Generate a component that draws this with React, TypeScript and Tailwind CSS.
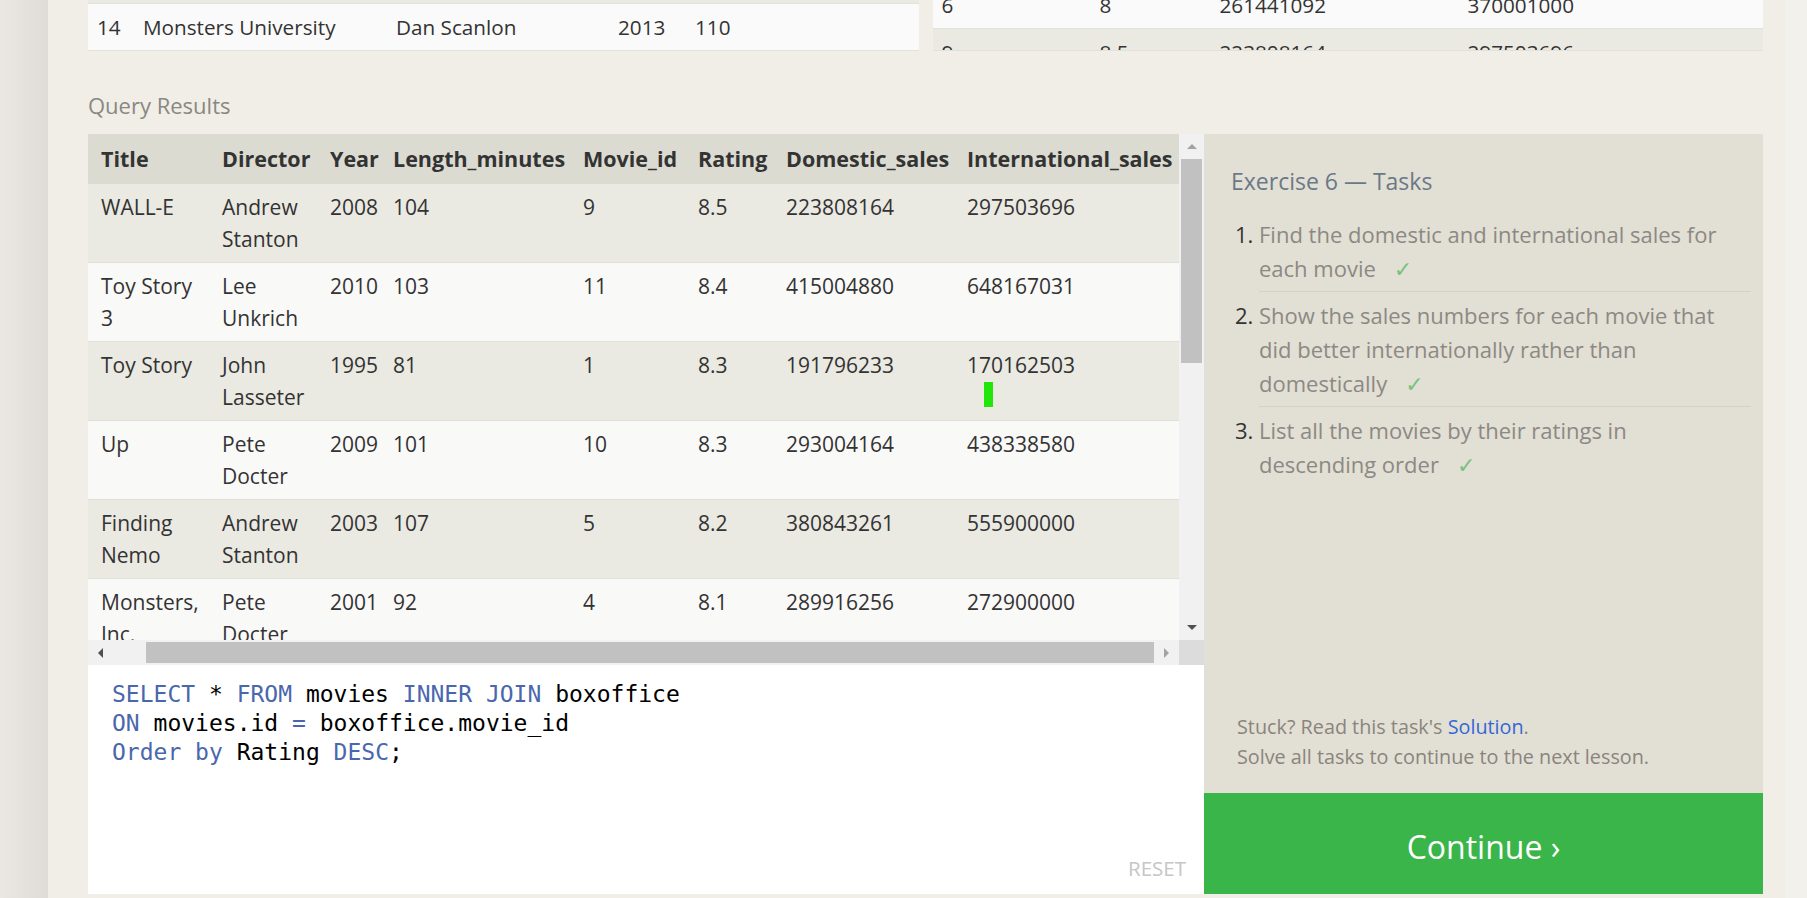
import React from 'react'

const resultCols = 'grid grid-cols-[121px_108px_63px_190px_115px_88px_181px_1fr]'

const headers = ['Title', 'Director', 'Year', 'Length_minutes', 'Movie_id', 'Rating', 'Domestic_sales', 'International_sales']

const rows = [
  ['WALL-E', 'Andrew Stanton', '2008', '104', '9', '8.5', '223808164', '297503696'],
  ['Toy Story 3', 'Lee Unkrich', '2010', '103', '11', '8.4', '415004880', '648167031'],
  ['Toy Story', 'John Lasseter', '1995', '81', '1', '8.3', '191796233', '170162503'],
  ['Up', 'Pete Docter', '2009', '101', '10', '8.3', '293004164', '438338580'],
  ['Finding Nemo', 'Andrew Stanton', '2003', '107', '5', '8.2', '380843261', '555900000'],
  ['Monsters, Inc.', 'Pete Docter', '2001', '92', '4', '8.1', '289916256', '272900000'],
  ['Ratatouille', 'Brad Bird', '2007', '115', '8', '8.0', '206445654', '417277164'],
]

const tasks = [
  'Find the domestic and international sales for each movie',
  'Show the sales numbers for each movie that did better internationally rather than domestically',
  'List all the movies by their ratings in descending order',
]

function Arrow({ dir, dark }: { dir: 'up' | 'down' | 'left' | 'right'; dark?: boolean }) {
  const pts = {
    up: '0,6 5,1 10,6',
    down: '0,1 5,6 10,1',
    left: '6,0 1,5 6,10',
    right: '1,0 6,5 1,10',
  }[dir]
  const vertical = dir === 'up' || dir === 'down'
  return (
    <svg width={vertical ? 10 : 7} height={vertical ? 7 : 10} viewBox={vertical ? '0 0 10 7' : '0 0 7 10'}>
      <polygon points={pts} fill={dark ? '#505050' : '#a3a3a3'} />
    </svg>
  )
}

function Kw({ children }: { children: React.ReactNode }) {
  return <span className="text-[#4a67ad]">{children}</span>
}

export default function App() {
  return (
    <div className="flex h-[898px] w-full overflow-hidden bg-[#f0eee6] font-['Open_Sans',sans-serif] text-[#333]">
      <div className="w-[48px] shrink-0 bg-gradient-to-r from-[#ebe8e4] to-[#dfdbd6]" />

      <div className="flex min-w-0 flex-1 flex-col pl-[40px] pr-[22px]">
        {/* tables scrolled above */}
        <div className="flex h-[51px] gap-[14px] text-[20.7px] leading-[32px]">
          <div className="flex flex-1 flex-col justify-end overflow-hidden border-b border-[#e2e1da]">
            <div className="grid shrink-0 grid-cols-[46px_253px_222px_77px_1fr] border-b border-[#e2e1da] bg-[#eae9e2] py-[7px]">
              <div className="pl-[9px]">13</div>
              <div className="pl-[9px]">Cars 2</div>
              <div className="pl-[9px]">John Lasseter</div>
              <div className="pl-[9px]">2011</div>
              <div className="pl-[9px]">120</div>
            </div>
            <div className="grid shrink-0 grid-cols-[46px_253px_222px_77px_1fr] bg-[#fafafa] py-[7px]">
              <div className="pl-[9px]">14</div>
              <div className="pl-[9px]">Monsters University</div>
              <div className="pl-[9px]">Dan Scanlon</div>
              <div className="pl-[9px]">2013</div>
              <div className="pl-[9px]">110</div>
            </div>
          </div>
          <div className="flex-1 overflow-hidden border-b border-[#e2e1da]">
            <div className="-mt-[18px] grid grid-cols-[158px_120px_248px_1fr] border-b border-[#e2e1da] bg-[#fafafa] py-[7px]">
              <div className="pl-[9px]">6</div>
              <div className="pl-[9px]">8</div>
              <div className="pl-[9px]">261441092</div>
              <div className="pl-[9px]">370001000</div>
            </div>
            <div className="grid grid-cols-[158px_120px_248px_1fr] bg-[#eae9e2] py-[7px]">
              <div className="pl-[9px]">9</div>
              <div className="pl-[9px]">8.5</div>
              <div className="pl-[9px]">223808164</div>
              <div className="pl-[9px]">297503696</div>
            </div>
          </div>
        </div>

        <div className="mt-[40px] text-[22px] leading-[28px] text-[#8a8782]">Query Results</div>

        <div className="mt-[15px] flex h-[760px]">
          {/* left: results + editor */}
          <div className="flex w-[1116px] shrink-0 flex-col">
            <div className="flex h-[531px] flex-col">
              <div className="flex h-[506px]">
                <div className="relative flex-1 overflow-hidden text-[21px] leading-[32px]">
                  <div className={`${resultCols} bg-[#dcdbd1] py-[9px] text-[21.5px] font-bold whitespace-nowrap`}>
                    {headers.map((h) => (
                      <div key={h} className="pl-[13px]">{h}</div>
                    ))}
                  </div>
                  {rows.map((r, i) => (
                    <div
                      key={r[0]}
                      className={`${resultCols} border-b border-[#e0dfd8] py-[7px] ${i % 2 === 0 ? 'bg-[#eae9e2]' : 'bg-[#f9f9f8]'}`}
                    >
                      {r.map((c, j) => (
                        <div key={j} className="pl-[13px] pr-[8px]">
                          {c}
                        </div>
                      ))}
                    </div>
                  ))}
                  <div className="absolute left-[896px] top-[248px] h-[25px] w-[9px] bg-[#22e60a]" />
                </div>
                {/* vertical scrollbar */}
                <div className="flex w-[25px] flex-col bg-[#f1f1f1]">
                  <div className="flex h-[25px] items-center justify-center">
                    <Arrow dir="up" />
                  </div>
                  <div className="mx-[2px] h-[204px] bg-[#c1c1c1]" />
                  <div className="flex-1" />
                  <div className="flex h-[25px] items-center justify-center">
                    <Arrow dir="down" dark />
                  </div>
                </div>
              </div>
              {/* horizontal scrollbar */}
              <div className="flex h-[25px] bg-[#f1f1f1]">
                <div className="flex w-[25px] items-center justify-center">
                  <Arrow dir="left" dark />
                </div>
                <div className="flex flex-1 items-center pl-[33px]">
                  <div className="h-[21px] flex-1 bg-[#c1c1c1]" />
                </div>
                <div className="flex w-[25px] items-center justify-center">
                  <Arrow dir="right" />
                </div>
                <div className="w-[25px] bg-[#dcdcdc]" />
              </div>
            </div>

            <div className="flex flex-1 flex-col bg-white pl-[24px] pr-[18px] pt-[15px] pb-[14px]">
              <div className="flex-1 font-['DejaVu_Sans_Mono',monospace] text-[23px] leading-[29px] whitespace-pre text-black">
                <div>
                  <Kw>SELECT</Kw> * <Kw>FROM</Kw> movies <Kw>INNER</Kw> <Kw>JOIN</Kw> boxoffice
                </div>
                <div>
                  <Kw>ON</Kw> movies.id <Kw>=</Kw> boxoffice.movie_id
                </div>
                <div>
                  <Kw>Order</Kw> <Kw>by</Kw> Rating <Kw>DESC</Kw>;
                </div>
              </div>
              <div className="self-end text-[20.5px] leading-[24px] text-[#c6c6c6]">RESET</div>
            </div>
          </div>

          {/* right: tasks panel */}
          <div className="flex flex-1 flex-col">
            <div className="flex flex-1 flex-col justify-between bg-[#e2dfd4]">
              <div className="pl-[27px] pr-[12px] pt-[32px]">
                <div className="text-[23px] leading-[30px] text-[#6a7888]">Exercise 6 — Tasks</div>
                <ol className="mt-[21px] text-[22px] leading-[34px]">
                  {tasks.map((t, i) => (
                    <li key={i} className="flex items-baseline">
                      <span className="w-[28px] shrink-0 pl-[4px] text-[#333]">{i + 1}.</span>
                      <div
                        className={`flex-1 text-[#8c8984] ${i === 0 ? 'pb-[4px]' : 'pt-[6px] pb-[4px]'} ${i < tasks.length - 1 ? 'border-b border-[#d4d1c6]' : ''}`}
                      >
                        <div className="max-w-[470px]">
                          {t}
                          <span className="ml-[18px] font-['DejaVu_Sans',sans-serif] text-[#76c27c]">✓</span>
                        </div>
                      </div>
                    </li>
                  ))}
                </ol>
              </div>
              <div className="pb-[21px] pl-[33px] text-[19.8px] leading-[30px] text-[#8a847e]">
                <div>
                  Stuck? Read this task's <span className="text-[#3567d6]">Solution</span>.
                </div>
                <div>Solve all tasks to continue to the next lesson.</div>
              </div>
            </div>
            <div className="flex h-[101px] items-center justify-center bg-[#3ab54a] pt-[6px] text-[32px] text-white">
              Continue ›
            </div>
          </div>
        </div>
      </div>

      <div className="w-[22px] shrink-0 bg-[#f3f1ec]" />
    </div>
  )
}
